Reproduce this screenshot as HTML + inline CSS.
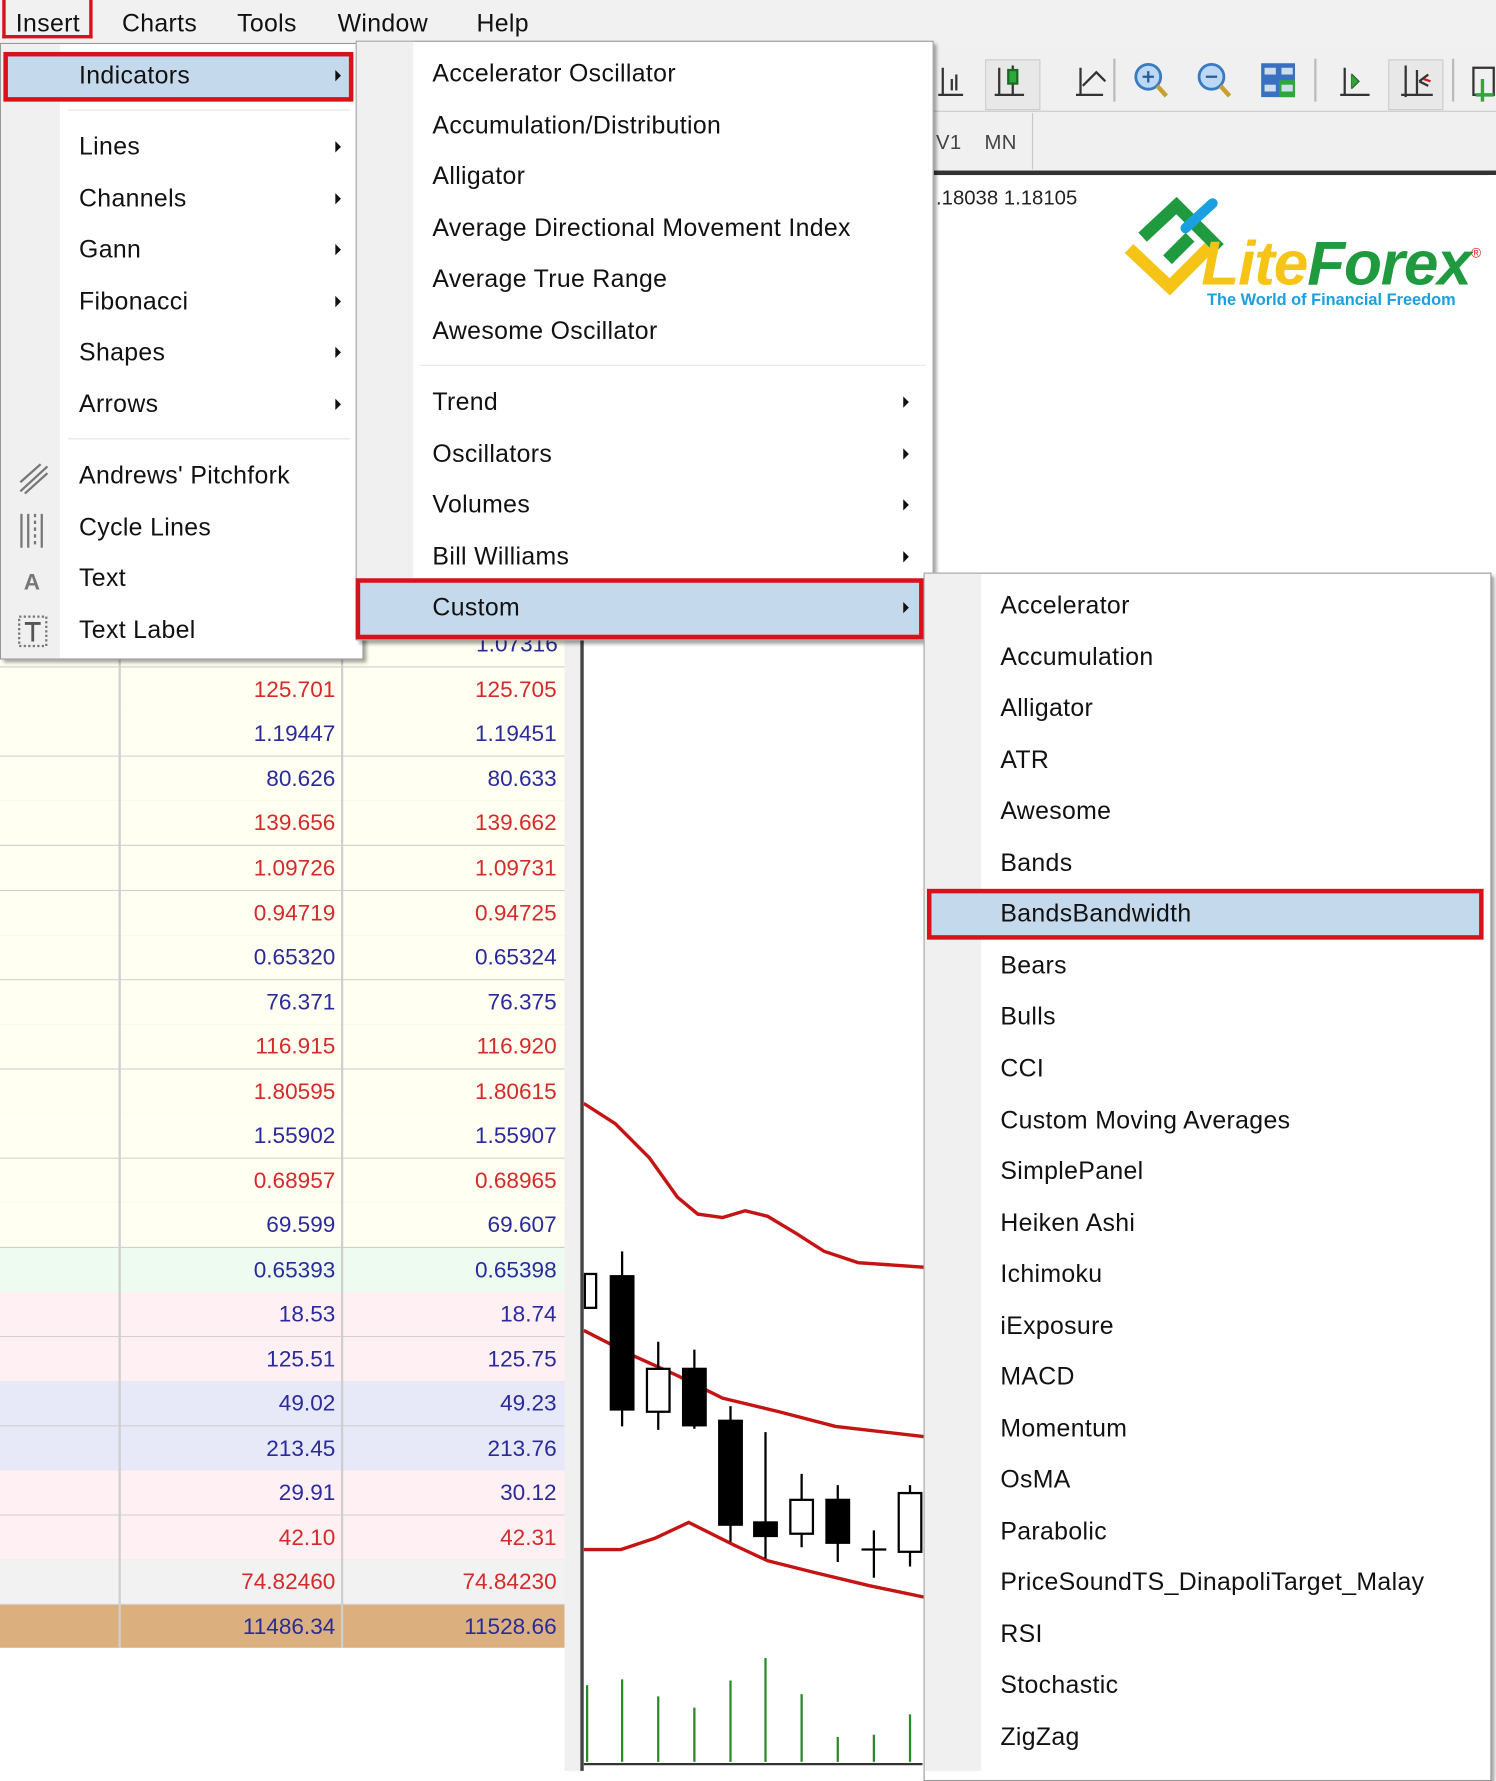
<!DOCTYPE html>
<html><head><meta charset="utf-8"><style>
html,body{margin:0;padding:0;width:1496px;height:1771px;overflow:hidden;background:#fff}
#w{position:absolute;left:0;top:0;width:1325px;height:1568px;transform:scale(1.12906,1.1294);transform-origin:0 0;font-family:"Liberation Sans",sans-serif;color:#111}
.a{position:absolute}
.mi{position:absolute;font-size:22px;line-height:24px;white-space:nowrap;letter-spacing:0.3px}
.arr{position:absolute;width:0;height:0;border-top:5px solid transparent;border-bottom:5px solid transparent;border-left:5px solid #111}
.row{position:absolute;left:0;width:500px;height:39px;border-bottom:1.5px solid #cfcfcf}
.row span{position:absolute;top:9px;font-size:20px;line-height:22px;text-align:right;width:120px}
.r{color:#d42a2a}.b{color:#2a2a9a}
</style></head><body><div id="w">
<div class="a" style="left:0;top:0;width:1325px;height:40px;background:#f1f1f1"></div>
<div class="mi" style="left:14px;top:9px;font-size:22px">Insert</div>
<div class="a" style="left:2px;top:0;width:80px;height:34px;border:3px solid #d8111b;border-top:none;box-sizing:border-box"></div>
<div class="mi" style="left:108px;top:9px;font-size:22px">Charts</div>
<div class="mi" style="left:210px;top:9px;font-size:22px">Tools</div>
<div class="mi" style="left:299px;top:9px;font-size:22px">Window</div>
<div class="mi" style="left:422px;top:9px;font-size:22px">Help</div>
<div class="a" style="left:827px;top:40px;width:498px;height:112px;background:#f0f0f0"></div>
<div class="a" style="left:827px;top:98px;width:498px;height:1px;background:#c8c8c8"></div>
<div class="a" style="left:914px;top:100px;width:1px;height:50px;background:#c8c8c8"></div>
<div class="mi" style="left:829px;top:114px;font-size:18px;color:#444">V1</div>
<div class="mi" style="left:872px;top:114px;font-size:18px;color:#444">MN</div>
<svg class="a" style="left:827px;top:40px" width="498" height="60" viewBox="0 0 498 60" fill="none" stroke="#333" stroke-width="2">
<path d="M8 20v24M4 44h22M16 30v10M20 26v14"/>
<rect x="46" y="13" width="48" height="44" stroke="#ccc" fill="#e8e8e8" stroke-width="1"/>
<path d="M58 20v24M54 44h26M70 18v26"/><rect x="66" y="22" width="8" height="12" fill="#2ea83a" stroke="#1a6a22"/>
<path d="M130 20v24M126 44h24M132 36l12-12 8 8"/>
<line x1="160" y1="12" x2="160" y2="50" stroke="#bbb"/>
<circle cx="190" cy="28" r="11" stroke="#3a7ac0" fill="#bcd8f4" stroke-width="2.5"/><path d="M185 28h10M190 23v10" stroke="#2a5a9a"/><path d="M198 36l8 9" stroke="#c8a030" stroke-width="4"/>
<circle cx="246" cy="28" r="11" stroke="#3a7ac0" fill="#bcd8f4" stroke-width="2.5"/><path d="M241 28h10" stroke="#2a5a9a"/><path d="M254 36l8 9" stroke="#c8a030" stroke-width="4"/>
<rect x="290" y="16" width="30" height="30" fill="#3a70c0" stroke="none"/><rect x="306" y="31" width="14" height="15" fill="#2ea83a" stroke="none"/><rect x="293" y="20" width="10" height="6" fill="#cde" stroke="none"/><rect x="308" y="20" width="10" height="6" fill="#cde" stroke="none"/><rect x="293" y="35" width="10" height="6" fill="#cde" stroke="none"/><rect x="308" y="35" width="10" height="6" fill="#cde" stroke="none"/>
<line x1="338" y1="12" x2="338" y2="50" stroke="#bbb"/>
<path d="M364 20v24M360 44h26M370 26l6 6-6 6" /><path d="M370 26l6 6-6 6z" fill="#2ea83a" stroke="#2a8a2a" stroke-width="1"/>
<rect x="403" y="13" width="48" height="44" stroke="#ccc" fill="#e8e8e8" stroke-width="1"/>
<path d="M418 18v28M414 44h28M428 22v22M430 32l8-6M430 32l8 4" /><path d="M434 30l6 2" stroke="#c02020"/>
<line x1="460" y1="12" x2="460" y2="50" stroke="#bbb"/>
<rect x="478" y="20" width="18" height="24" stroke="#333"/><path d="M486 30v20M480 44h16" stroke="#2ea83a" stroke-width="3"/>
</svg>
<div class="a" style="left:827px;top:151px;width:498px;height:4px;background:#333"></div>
<div class="mi" style="left:829px;top:163px;font-size:18px;color:#222;letter-spacing:0">.18038 1.18105</div>
<svg class="a" style="left:990px;top:172px" width="335" height="105" viewBox="0 0 335 105">
<path d="M10 48l36 34 40-40" stroke="#f5c416" stroke-width="11" fill="none" stroke-linejoin="miter"/>
<path d="M22 38l30-28 38 38" stroke="#1f9a3e" stroke-width="11" fill="none"/>
<path d="M44 58l20-20" stroke="#1f9a3e" stroke-width="11"/>
<path d="M60 30l24-22" stroke="#1aa0e0" stroke-width="9" stroke-linecap="round"/>
<text x="74" y="80" font-family="Liberation Sans" font-weight="bold" font-style="italic" font-size="55" fill="#f5c416" letter-spacing="-1">Lite<tspan fill="#1f9a3e">Forex</tspan></text>
<text x="313" y="56" font-size="12" fill="#e02020" font-family="Liberation Sans">®</text>
<text x="79" y="98" font-family="Liberation Sans" font-weight="bold" font-size="14.5" fill="#1aa0e0">The World of Financial Freedom</text>
</svg>
<div class="a" style="left:0;top:545px;width:500px;height:1023px;background:#fff"></div>
<div class="row" style="top:551px;background:#fffff2"><span class="b" style="left:374px">1.07316</span></div>
<div class="row" style="top:591px;background:#fffff2"><span class="r" style="left:177px">125.701</span><span class="r" style="left:373px">125.705</span></div>
<div class="row" style="top:630px;background:#fffff2"><span class="b" style="left:177px">1.19447</span><span class="b" style="left:373px">1.19451</span></div>
<div class="row" style="top:670px;background:#fffff2"><span class="b" style="left:177px">80.626</span><span class="b" style="left:373px">80.633</span></div>
<div class="row" style="top:709px;background:#fffff2"><span class="r" style="left:177px">139.656</span><span class="r" style="left:373px">139.662</span></div>
<div class="row" style="top:749px;background:#fffff2"><span class="r" style="left:177px">1.09726</span><span class="r" style="left:373px">1.09731</span></div>
<div class="row" style="top:789px;background:#fffff2"><span class="r" style="left:177px">0.94719</span><span class="r" style="left:373px">0.94725</span></div>
<div class="row" style="top:828px;background:#fffff2"><span class="b" style="left:177px">0.65320</span><span class="b" style="left:373px">0.65324</span></div>
<div class="row" style="top:868px;background:#fffff2"><span class="b" style="left:177px">76.371</span><span class="b" style="left:373px">76.375</span></div>
<div class="row" style="top:907px;background:#fffff2"><span class="r" style="left:177px">116.915</span><span class="r" style="left:373px">116.920</span></div>
<div class="row" style="top:947px;background:#fffff2"><span class="r" style="left:177px">1.80595</span><span class="r" style="left:373px">1.80615</span></div>
<div class="row" style="top:986px;background:#fffff2"><span class="b" style="left:177px">1.55902</span><span class="b" style="left:373px">1.55907</span></div>
<div class="row" style="top:1026px;background:#fffff2"><span class="r" style="left:177px">0.68957</span><span class="r" style="left:373px">0.68965</span></div>
<div class="row" style="top:1065px;background:#fffff2"><span class="b" style="left:177px">69.599</span><span class="b" style="left:373px">69.607</span></div>
<div class="row" style="top:1105px;background:#eefbf0"><span class="b" style="left:177px">0.65393</span><span class="b" style="left:373px">0.65398</span></div>
<div class="row" style="top:1144px;background:#fff0f3"><span class="b" style="left:177px">18.53</span><span class="b" style="left:373px">18.74</span></div>
<div class="row" style="top:1184px;background:#fff0f3"><span class="b" style="left:177px">125.51</span><span class="b" style="left:373px">125.75</span></div>
<div class="row" style="top:1223px;background:#e7e8f8"><span class="b" style="left:177px">49.02</span><span class="b" style="left:373px">49.23</span></div>
<div class="row" style="top:1263px;background:#e7e8f8"><span class="b" style="left:177px">213.45</span><span class="b" style="left:373px">213.76</span></div>
<div class="row" style="top:1302px;background:#fff0f3"><span class="b" style="left:177px">29.91</span><span class="b" style="left:373px">30.12</span></div>
<div class="row" style="top:1342px;background:#fff0f3"><span class="r" style="left:177px">42.10</span><span class="r" style="left:373px">42.31</span></div>
<div class="row" style="top:1381px;background:#f2f2f2"><span class="r" style="left:177px">74.82460</span><span class="r" style="left:373px">74.84230</span></div>
<div class="row" style="top:1421px;background:#dcb07e;border-bottom:none;height:38px"><span class="b" style="left:177px">11486.34</span><span class="b" style="left:373px">11528.66</span></div>
<div class="a" style="left:105px;top:551px;width:1.5px;height:908px;background:#cfcfcf"></div>
<div class="a" style="left:302px;top:551px;width:1.5px;height:908px;background:#cfcfcf"></div>
<div class="a" style="left:500px;top:545px;width:14px;height:1023px;background:#f0f0f0"></div>
<div class="a" style="left:514px;top:545px;width:3px;height:1023px;background:#444"></div>
<svg class="a" style="left:517px;top:545px" width="310" height="1023" viewBox="517 545 310 1023">
<g fill="none" stroke="#c41414" stroke-width="3">
<path d="M517 977L545 995 575 1025 600 1060 618 1075 640 1078 660 1072 680 1077 705 1092 730 1108 760 1118 818 1122"/>
<path d="M517 1178L560 1200 600 1218 640 1238 690 1250 740 1263 818 1272"/>
<path d="M517 1372L550 1372 580 1362 610 1348 650 1368 680 1382 720 1392 770 1404 818 1414"/>
</g>
<g stroke="#000" stroke-width="2">
<path d="M551 1108v155M583 1188v78M615 1195v70M647 1245v120M678 1268v112M710 1305v65M742 1315v68M774 1355v42M806 1315v72"/>
<rect x="518" y="1128" width="10" height="30" fill="#fff"/>
<rect x="541" y="1130" width="20" height="118" fill="#000"/>
<rect x="573" y="1212" width="20" height="38" fill="#fff"/>
<rect x="605" y="1212" width="20" height="50" fill="#000"/>
<rect x="637" y="1258" width="20" height="92" fill="#000"/>
<rect x="668" y="1348" width="20" height="12" fill="#000"/>
<rect x="700" y="1328" width="20" height="30" fill="#fff"/>
<rect x="732" y="1328" width="20" height="38" fill="#000"/>
<path d="M763 1372h22"/>
<rect x="796" y="1322" width="20" height="52" fill="#fff"/>
</g>
<g stroke="#2a8a2a" stroke-width="2">
<path d="M520 1560v-68M551 1560v-73M583 1560v-58M615 1560v-48M647 1560v-72M678 1560v-92M710 1560v-60M742 1560v-22M774 1560v-24M806 1560v-42"/>
</g>
<path d="M517 1562h300" stroke="#333" stroke-width="2"/>
</svg>
<div class="a" style="left:1318px;top:155px;width:7px;height:1413px;background:#fff"></div>
<div class="a" style="left:0;top:38px;width:322px;height:546px;background:#fff;border:1px solid #999;box-sizing:border-box;box-shadow:3px 3px 3px rgba(0,0,0,.35)"></div>
<div class="a" style="left:1px;top:39px;width:52px;height:544px;background:#f0f0f0"></div>
<div class="a" style="left:6px;top:49px;width:304px;height:38px;background:#c5d9ec"></div>
<div class="a" style="left:3px;top:46px;width:310px;height:44px;border:4px solid #d8111b;box-sizing:border-box"></div>
<div class="a" style="left:60px;top:97px;width:250px;height:1px;background:#e6e6e6"></div>
<div class="a" style="left:60px;top:388px;width:250px;height:1px;background:#e6e6e6"></div>
<div class="mi" style="left:70px;top:55px">Indicators</div><div class="arr" style="left:297px;top:62px"></div>
<div class="mi" style="left:70px;top:118px">Lines</div><div class="arr" style="left:297px;top:125px"></div>
<div class="mi" style="left:70px;top:164px">Channels</div><div class="arr" style="left:297px;top:171px"></div>
<div class="mi" style="left:70px;top:209px">Gann</div><div class="arr" style="left:297px;top:216px"></div>
<div class="mi" style="left:70px;top:255px">Fibonacci</div><div class="arr" style="left:297px;top:262px"></div>
<div class="mi" style="left:70px;top:300px">Shapes</div><div class="arr" style="left:297px;top:307px"></div>
<div class="mi" style="left:70px;top:346px">Arrows</div><div class="arr" style="left:297px;top:353px"></div>
<div class="mi" style="left:70px;top:409px">Andrews' Pitchfork</div>
<div class="mi" style="left:70px;top:455px">Cycle Lines</div>
<div class="mi" style="left:70px;top:500px">Text</div>
<div class="mi" style="left:70px;top:546px">Text Label</div>
<svg class="a" style="left:12px;top:405px" width="36" height="172" viewBox="0 0 36 172" stroke="#777" stroke-width="2" fill="none">
<path d="M6 22L24 6M6 30L30 8M10 32L30 14"/>
<path d="M7 50v30M13 50v30M25 50v30" /><path d="M19 50v30" stroke-dasharray="3 3"/>
<text x="9" y="117" font-family="Liberation Sans" font-size="20" fill="#777" stroke="none" font-weight="bold">A</text>
<rect x="5" y="141" width="24" height="26" stroke-dasharray="2 2"/><path d="M10 147h14M17 147v16" stroke="#555" stroke-width="2.5"/>
</svg>
<div class="a" style="left:315px;top:36px;width:512px;height:531px;background:#fff;border:1px solid #999;box-sizing:border-box;box-shadow:3px 3px 3px rgba(0,0,0,.35)"></div>
<div class="a" style="left:316px;top:37px;width:50px;height:476px;background:#f0f0f0"></div>
<div class="a" style="left:372px;top:323px;width:448px;height:1px;background:#e6e6e6"></div>
<div class="a" style="left:318px;top:515px;width:497px;height:48px;background:#c5d9ec"></div>
<div class="a" style="left:315px;top:512px;width:503px;height:54px;border:4px solid #d8111b;box-sizing:border-box"></div>
<div class="mi" style="left:383px;top:53px">Accelerator Oscillator</div>
<div class="mi" style="left:383px;top:99px">Accumulation/Distribution</div>
<div class="mi" style="left:383px;top:144px">Alligator</div>
<div class="mi" style="left:383px;top:190px">Average Directional Movement Index</div>
<div class="mi" style="left:383px;top:235px">Average True Range</div>
<div class="mi" style="left:383px;top:281px">Awesome Oscillator</div>
<div class="mi" style="left:383px;top:344px">Trend</div><div class="arr" style="left:800px;top:351px"></div>
<div class="mi" style="left:383px;top:390px">Oscillators</div><div class="arr" style="left:800px;top:397px"></div>
<div class="mi" style="left:383px;top:435px">Volumes</div><div class="arr" style="left:800px;top:442px"></div>
<div class="mi" style="left:383px;top:481px">Bill Williams</div><div class="arr" style="left:800px;top:488px"></div>
<div class="mi" style="left:383px;top:526px">Custom</div><div class="arr" style="left:800px;top:533px"></div>
<div class="a" style="left:818px;top:507px;width:503px;height:1070px;background:#fff;border:1px solid #999;box-sizing:border-box;box-shadow:3px 3px 3px rgba(0,0,0,.35)"></div>
<div class="a" style="left:819px;top:508px;width:50px;height:1060px;background:#f0f0f0"></div>
<div class="a" style="left:824px;top:790px;width:486px;height:38px;background:#c5d9ec"></div>
<div class="a" style="left:821px;top:787px;width:493px;height:45px;border:4px solid #d8111b;box-sizing:border-box"></div>
<div class="mi" style="left:886px;top:524px">Accelerator</div>
<div class="mi" style="left:886px;top:570px">Accumulation</div>
<div class="mi" style="left:886px;top:615px">Alligator</div>
<div class="mi" style="left:886px;top:661px">ATR</div>
<div class="mi" style="left:886px;top:706px">Awesome</div>
<div class="mi" style="left:886px;top:752px">Bands</div>
<div class="mi" style="left:886px;top:797px">BandsBandwidth</div>
<div class="mi" style="left:886px;top:843px">Bears</div>
<div class="mi" style="left:886px;top:888px">Bulls</div>
<div class="mi" style="left:886px;top:934px">CCI</div>
<div class="mi" style="left:886px;top:980px">Custom Moving Averages</div>
<div class="mi" style="left:886px;top:1025px">SimplePanel</div>
<div class="mi" style="left:886px;top:1071px">Heiken Ashi</div>
<div class="mi" style="left:886px;top:1116px">Ichimoku</div>
<div class="mi" style="left:886px;top:1162px">iExposure</div>
<div class="mi" style="left:886px;top:1207px">MACD</div>
<div class="mi" style="left:886px;top:1253px">Momentum</div>
<div class="mi" style="left:886px;top:1298px">OsMA</div>
<div class="mi" style="left:886px;top:1344px">Parabolic</div>
<div class="mi" style="left:886px;top:1389px">PriceSoundTS_DinapoliTarget_Malay</div>
<div class="mi" style="left:886px;top:1435px">RSI</div>
<div class="mi" style="left:886px;top:1480px">Stochastic</div>
<div class="mi" style="left:886px;top:1526px">ZigZag</div>
</div></body></html>
